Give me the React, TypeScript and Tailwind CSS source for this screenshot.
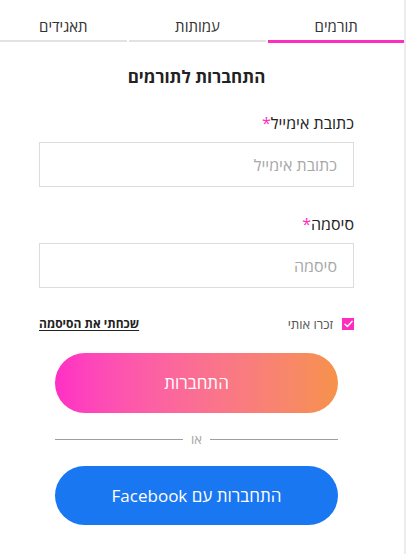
import React, { useState } from 'react';

const tabs = [
  { label: 'תאגידים', w: 'w-[127px]' },
  { label: 'עמותות', w: 'w-[138px]' },
  { label: 'תורמים', w: 'w-[136px]' },
];

export default function App() {
  const [active, setActive] = useState('תורמים');
  const [remember, setRemember] = useState(true);

  return (
    <div
      className="flex h-[554px] w-[406px] bg-white text-[#333]"
      style={{ fontFamily: '"Open Sans", "DejaVu Sans", sans-serif' }}
    >
      <div className="flex w-[404px] flex-col">
        {/* tabs */}
        <div className="flex gap-[2px] pt-[10px]">
          {tabs.map((t) => (
            <button
              key={t.label}
              onClick={() => setActive(t.label)}
              className={`${t.w} flex h-[33px] flex-col justify-between pt-[6px] text-[15px] leading-[20px]`}
            >
              <span className="block text-center">{t.label}</span>
              {active === t.label ? (
                <span className="block h-[3px] w-full bg-[#ff2cc0]" />
              ) : (
                <span className="mb-[1px] block h-[2px] w-full bg-[#e2e1e6]" />
              )}
            </button>
          ))}
        </div>

        <form dir="rtl" className="flex flex-col pl-[39px] pr-[50px]" onSubmit={(e) => e.preventDefault()}>
          <h2 className="mt-[22px] text-center text-[17px] font-bold leading-[24px] text-[#222]">
            התחברות לתורמים
          </h2>

          <label className="mt-[23px] text-[16px] leading-[22px] text-[#222]">
            כתובת אימייל<span className="text-[#ff2cc0]">*</span>
          </label>
          <input
            type="email"
            placeholder="כתובת אימייל"
            className="mt-[8px] h-[45px] border border-[#dcdcdc] px-[16px] text-[16px] outline-none placeholder:text-[#a8a8a8]"
          />

          <label className="mt-[26px] text-[16px] leading-[22px] text-[#222]">
            סיסמה<span className="text-[#ff2cc0]">*</span>
          </label>
          <input
            type="password"
            placeholder="סיסמה"
            className="mt-[8px] h-[45px] border border-[#dcdcdc] px-[16px] text-[16px] outline-none placeholder:text-[#a8a8a8]"
          />

          <div className="mt-[27px] flex items-center justify-between">
            <label className="flex items-center gap-[9px] text-[13px] leading-[18px] text-[#555]">
              <span
                onClick={() => setRemember(!remember)}
                className={`flex h-[12px] w-[12px] items-center justify-center ${remember ? 'bg-[#ff2cc0]' : 'border border-[#aaa]'}`}
              >
                {remember && (
                  <svg width="9" height="8" viewBox="0 0 9 8" fill="none">
                    <path d="M1 4.2 3.4 6.4 8 1.4" stroke="#fff" strokeWidth="1.5" strokeLinecap="round" strokeLinejoin="round" />
                  </svg>
                )}
              </span>
              זכרו אותי
            </label>
            <a href="#" className="text-[12px] font-bold leading-[18px] text-[#222] underline underline-offset-2">
              שכחתי את הסיסמה
            </a>
          </div>

          <div className="flex flex-col px-[16px]">
            <button
              type="submit"
              className="mt-[20px] h-[60px] rounded-full bg-gradient-to-l from-[#f6924a] to-[#ff2ec6] text-[17px] text-white"
            >
              התחברות
            </button>

            <div className="mt-[17px] flex items-center gap-[8px]">
              <span className="h-px flex-1 bg-[#9e9e9e]" />
              <span className="text-[13px] leading-[18px] text-[#a5a5a5]">או</span>
              <span className="h-px flex-1 bg-[#9e9e9e]" />
            </div>

            <button
              type="button"
              className="mt-[18px] h-[59px] rounded-full bg-[#1a77f2] text-[17px] text-white"
            >
              התחברות עם Facebook
            </button>
          </div>
        </form>
      </div>
      <div className="w-[2px] bg-[#ececec]" />
    </div>
  );
}
